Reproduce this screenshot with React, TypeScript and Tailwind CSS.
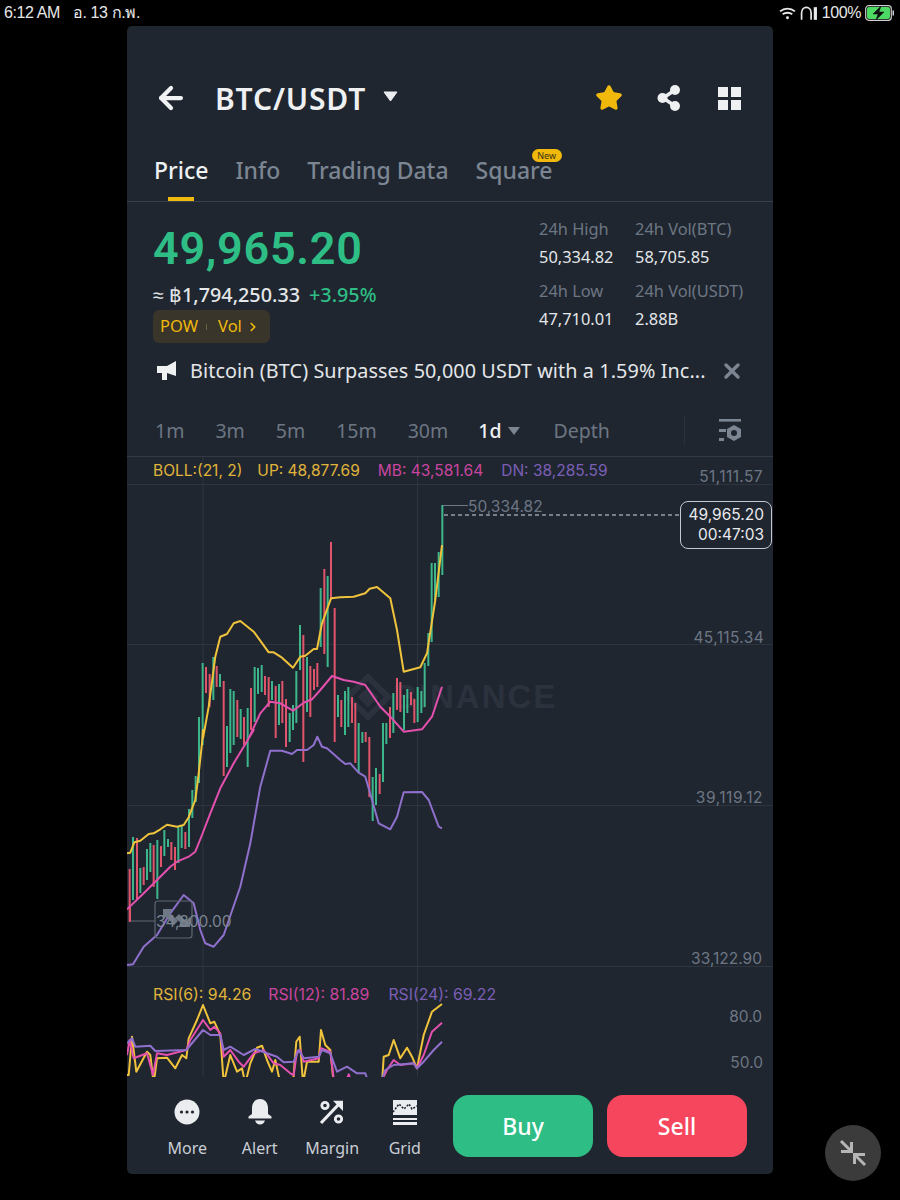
import React from "react";
import { ArrowLeft, X, Star, ChevronRight } from "lucide-react";

type P = [number, number];
const conv = (pts: P[], ox: number, oy: number) => pts.map(([x, y]) => `${(ox + x / 3).toFixed(1)},${(oy + y / 3).toFixed(1)}`).join(" ");
const z3 = (pts: P[]) => conv(pts, 127, 490);
const z4 = (pts: P[]) => conv(pts, 127, 730);
const z5 = (pts: P[]) => conv(pts, 127, 975);

const candles: [number, number, number, "g" | "r"][] = [
  [8, 869, 922, "r"], [18, 837, 900, "g"], [30, 838, 900, "r"], [40, 868, 893, "g"], [50, 867, 885, "r"], [60, 849, 880, "g"], [70, 843, 872, "g"], [80, 845, 887, "r"], [91, 840, 899, "g"], [102, 846, 867, "r"], [112, 830, 856, "g"], [123, 839, 847, "g"], [133, 842, 860, "r"], [144, 847, 870, "r"], [154, 827, 863, "g"], [164, 826, 848, "g"], [175, 832, 849, "r"], [186, 809, 847, "g"], [196, 790, 818, "g"], [206, 776, 802, "g"],
  [216, 717, 783, "g"], [227, 663, 745, "g"], [237, 667, 693, "r"], [248, 674, 707, "r"], [259, 657, 700, "g"], [269, 666, 687, "r"], [279, 674, 687, "g"], [290, 681, 776, "r"], [300, 726, 767, "g"], [310, 689, 753, "g"], [320, 691, 745, "g"], [331, 700, 737, "r"], [341, 709, 739, "g"], [351, 717, 745, "r"], [362, 708, 767, "g"], [372, 688, 730, "r"], [383, 667, 722, "g"], [393, 668, 694, "g"], [404, 665, 692, "g"], [414, 676, 695, "r"], [425, 677, 707, "r"], [435, 681, 700, "g"], [446, 686, 738, "r"], [456, 684, 725, "g"], [466, 681, 723, "r"], [477, 699, 747, "r"], [488, 713, 742, "g"], [498, 705, 730, "g"], [508, 671, 723, "g"], [519, 625, 670, "g"], [529, 635, 762, "r"], [540, 657, 712, "g"], [550, 666, 717, "r"], [561, 669, 690, "r"], [571, 663, 687, "r"], [581, 588, 647, "g"], [592, 569, 654, "r"], [602, 576, 667, "g"], [612, 542, 600, "r"], [623, 608, 742, "r"], [633, 695, 717, "g"], [643, 700, 727, "r"], [654, 691, 735, "g"], [664, 687, 727, "g"], [675, 697, 723, "r"], [685, 703, 763, "r"], [695, 723, 773, "g"], [706, 732, 743, "g"], [716, 732, 742, "r"], [727, 737, 797, "r"], [737, 777, 821, "g"], [747, 768, 805, "g"], [758, 774, 794, "r"], [768, 723, 782, "g"], [778, 723, 744, "g"], [789, 707, 738, "r"], [799, 693, 733, "g"], [810, 678, 710, "r"], [820, 682, 712, "r"], [831, 695, 730, "g"], [841, 689, 713, "g"], [852, 692, 705, "r"], [862, 699, 723, "r"], [872, 687, 722, "g"], [883, 691, 713, "g"], [893, 663, 707, "g"], [904, 633, 666, "g"], [914, 563, 642, "g"], [924, 563, 600, "g"], [935, 552, 597, "g"], [946, 505, 575, "g"],
];

const yellow = z4([[0, 370], [10, 368], [22, 337], [40, 332], [65, 312], [80, 310], [100, 298], [120, 284], [135, 287], [150, 290], [170, 285], [185, 262], [195, 235], [205, 210], [215, 130], [225, 40], [228, 0]]) + " " + z3([[228, 745], [245, 650], [265, 500], [280, 440], [300, 432], [320, 400], [340, 393], [380, 425], [425, 487], [440, 487], [465, 503], [498, 533], [520, 500], [535, 497], [560, 477], [570, 477], [585, 400], [612, 325], [640, 322], [680, 320], [715, 310], [728, 296], [750, 291], [790, 325], [810, 420], [830, 545], [880, 532], [900, 490], [925, 330], [945, 165]]);
const pink = z4([[0, 538], [50, 490], [100, 440], [130, 410], [150, 395], [185, 380], [205, 365], [225, 315], [250, 250], [280, 175], [320, 100], [350, 50], [380, 0]]) + " " + z3([[365, 745], [400, 670], [430, 635], [460, 640], [498, 662], [530, 638], [555, 628], [580, 600], [615, 558], [650, 570], [680, 575], [715, 585], [760, 650], [790, 680], [830, 725], [885, 718], [915, 680], [945, 590]]);
const purple = z4([[0, 705], [18, 703], [50, 650], [90, 615], [130, 550], [170, 495], [200, 520], [220, 600], [235, 640], [260, 650], [290, 615], [340, 470], [370, 340], [400, 170], [430, 62], [465, 62], [495, 72], [510, 60], [540, 60], [560, 45], [571, 20], [585, 50], [600, 55], [640, 90], [655, 102], [670, 100], [695, 128], [715, 140], [735, 210], [755, 280], [790, 298], [810, 260], [830, 187], [885, 186], [905, 210], [935, 290], [945, 295]]);
const rsiY = z5([[0, 300], [5, 300], [15, 185], [28, 290], [60, 230], [70, 240], [80, 325], [90, 250], [120, 248], [145, 280], [165, 240], [178, 250], [185, 190], [210, 135], [228, 90], [250, 145], [262, 140], [280, 180], [290, 325], [310, 240], [330, 290], [345, 280], [355, 325], [370, 265], [390, 218], [405, 212], [420, 255], [435, 290], [445, 255], [460, 325], [498, 325], [508, 200], [518, 185], [528, 325], [540, 260], [575, 260], [582, 165], [595, 210], [610, 225], [620, 325], [765, 325], [770, 245], [785, 240], [800, 195], [820, 250], [840, 218], [855, 245], [870, 280], [890, 180], [915, 110], [945, 87]]);
const rsiP = z5([[0, 240], [8, 195], [20, 250], [60, 235], [78, 300], [90, 235], [120, 240], [178, 225], [190, 195], [228, 135], [250, 165], [262, 155], [280, 175], [290, 245], [310, 225], [335, 260], [350, 275], [380, 235], [410, 225], [440, 265], [460, 270], [490, 295], [500, 300], [510, 230], [520, 225], [530, 260], [575, 250], [582, 220], [610, 230], [622, 325], [655, 325], [665, 298], [675, 325], [760, 325], [780, 285], [800, 255], [820, 270], [860, 265], [870, 280], [890, 240], [915, 170], [945, 143]]);
const rsiV = z5([[0, 205], [15, 190], [25, 215], [70, 212], [85, 228], [178, 225], [228, 165], [250, 180], [280, 180], [290, 225], [310, 215], [350, 240], [385, 222], [420, 235], [450, 245], [470, 262], [500, 260], [515, 225], [530, 250], [575, 245], [585, 225], [610, 235], [630, 290], [660, 275], [690, 295], [715, 295], [725, 325], [760, 325], [775, 285], [800, 270], [860, 265], [870, 280], [890, 260], [920, 225], [945, 200]]);

function Chart() {
  return (
    <svg viewBox="127 457 646 620" width={646} height={620} className="relative z-10 block">
      <g stroke="#2e353f" strokeWidth="1">
        <line x1="127" x2="773" y1="484.5" y2="484.5" />
        <line x1="127" x2="773" y1="644.5" y2="644.5" />
        <line x1="127" x2="773" y1="805.5" y2="805.5" />
        <line x1="127" x2="773" y1="966.5" y2="966.5" />
        <line x1="203" x2="203" y1="457" y2="1077" />
        <line x1="417.5" x2="417.5" y1="457" y2="1077" />
      </g>
      <g fill="none" stroke="#2b323d" strokeWidth="5">
        <path d="M368 677 L388 697 L368 717 L348 697 Z" strokeWidth="6" />
        <path d="M368 690 L375 697 L368 704 L361 697 Z" fill="#2b323d" />
      </g>
      <path d="M129 921 H155" stroke="#5d6672" strokeWidth="1" fill="none" />
      <path d="M130 905 V921" stroke="#e5566d" strokeWidth="2" />
      {candles.map(([x, t, b, c], i) => (
        <rect key={i} x={127 + x / 3 - 1} y={t} width={2} height={b - t} fill={c === "g" ? "#3cb68a" : "#e0556b"} />
      ))}
      <path d="M443 505.5 H468" stroke="#6f7885" strokeWidth="1" fill="none" />
      <path d="M444 515 H680" stroke="#d5d8dc" strokeWidth="1" strokeDasharray="4 3" fill="none" />
      <polyline points={yellow} fill="none" stroke="#f0c33c" strokeWidth="2" strokeLinejoin="round" />
      <polyline points={pink} fill="none" stroke="#e350ae" strokeWidth="2" strokeLinejoin="round" />
      <polyline points={purple} fill="none" stroke="#8f70cc" strokeWidth="2" strokeLinejoin="round" />
      <polyline points={rsiY} fill="none" stroke="#f0c33c" strokeWidth="2" strokeLinejoin="round" />
      <polyline points={rsiP} fill="none" stroke="#e350ae" strokeWidth="2" strokeLinejoin="round" />
      <polyline points={rsiV} fill="none" stroke="#8f70cc" strokeWidth="2" strokeLinejoin="round" />
      <rect x="155" y="901" width="37" height="37" rx="3" fill="none" stroke="#5d6672" strokeWidth="1.2" />
      <path d="M163 909 H173 L170 913 L178 921 L174 925 L166 917 L163 920 Z M190 927 H178 L181 923 L175 918 L179 914 L186 921 L190 917 Z" fill="#6f7885" />
    </svg>
  );
}

function MoreIcon() {
  return (
    <svg width="26" height="26" viewBox="0 0 26 26"><circle cx="13" cy="13" r="12.5" fill="#eaecef" /><circle cx="7.5" cy="13" r="1.6" fill="#1e2530" /><circle cx="13" cy="13" r="1.6" fill="#1e2530" /><circle cx="18.5" cy="13" r="1.6" fill="#1e2530" /></svg>
  );
}
function BellIcon() {
  return (
    <svg width="26" height="28" viewBox="0 0 26 28"><path d="M13 1 C7.5 1 5 5.5 5 10 V16 L1.5 18.5 V20.5 H24.5 V18.5 L21 16 V10 C21 5.5 18.5 1 13 1 Z" fill="#eaecef" /><path d="M8 22.5 H18 C17 25 15.5 26.5 13 26.5 C10.5 26.5 9 25 8 22.5 Z" fill="#eaecef" /></svg>
  );
}
function MarginIcon() {
  return (
    <svg width="26" height="26" viewBox="0 0 26 26" fill="none" stroke="#eaecef"><circle cx="6" cy="6.5" r="3.2" strokeWidth="2.8" /><circle cx="19.5" cy="20" r="3.2" strokeWidth="2.8" /><path d="M2 24 L21 4" strokeWidth="3.2" /><path d="M14 1.8 H24 V12 Z" fill="#eaecef" stroke="none" /></svg>
  );
}
function GridIcon() {
  return (
    <svg width="26" height="26" viewBox="0 0 26 26"><path d="M1 1 H25 V16 H1 Z" fill="#eaecef" /><path d="M1 13 L7 5 L12 10 L17 5 L20 10 L25 7" fill="none" stroke="#1e2530" strokeWidth="1.6" strokeDasharray="2 1.5" /><rect x="1" y="19" width="24" height="2" fill="#eaecef" /><rect x="1" y="23" width="24" height="3" fill="#eaecef" /></svg>
  );
}

export default function App() {
  const tf = ["1m", "3m", "5m", "15m", "30m"];
  return (
    <div className="relative w-[900px] h-[1200px] bg-black overflow-hidden font-['Noto_Sans',sans-serif]">
      <div className="h-[26px] flex items-center justify-between pl-[4px] pr-[5px] text-[#e8e8e8] text-[16px] font-['Liberation_Sans','Noto_Sans',sans-serif]">
        <div className="flex gap-[13px]">
          <span className="tracking-[-0.4px]">6:12 AM</span>
          <span className="tracking-[-0.4px]">อ. 13 ก.พ.</span>
        </div>
        <div className="flex items-center gap-[4px]">
          <svg width="17" height="13" viewBox="0 0 16 12" fill="none" stroke="#e8e8e8" strokeWidth="1.8"><path d="M1 4 C5 0.5 11 0.5 15 4" /><path d="M3.5 6.8 C6 4.8 10 4.8 12.5 6.8" /><circle cx="8" cy="10" r="1.4" fill="#e8e8e8" stroke="none" /></svg>
          <svg width="18" height="15" viewBox="0 0 17 14" fill="none" stroke="#e8e8e8" strokeWidth="1.6"><path d="M1.5 13 V6.5 C1.5 -0.5 10.5 -0.5 10.5 6.5 V13" /><rect x="13" y="1" width="3" height="12" fill="#e8e8e8" stroke="none" /></svg>
          <span className="tracking-[-0.4px]">100%</span>
          <svg width="30" height="16" viewBox="0 0 30 16"><rect x="0.7" y="0.7" width="25.6" height="14.6" rx="3" fill="none" stroke="#cfcfcf" strokeWidth="1.2" /><rect x="2" y="2" width="23" height="12" rx="2" fill="#4cd964" /><path d="M16 1 L8 9 H13 L11 15 L19 7 H14 Z" fill="#111" stroke="#111" strokeWidth="0.5" /><rect x="27.5" y="5.5" width="1.5" height="5" fill="#cfcfcf" /></svg>
        </div>
      </div>

      <div className="ml-[127px] w-[646px] h-[1148px] bg-[#1f2630] rounded-[5px] overflow-hidden flex flex-col">
        <div className="mt-[46px] h-[52px] flex items-center pl-[27px] pr-[32px]">
          <ArrowLeft size={34} strokeWidth={3} color="#f1f2f4" />
          <span className="ml-[27px] text-[30px] font-semibold text-[#eef0f2] tracking-[0.85px]">BTC/USDT</span>
          <svg className="ml-[17px] mb-[3px]" width="15" height="11" viewBox="0 0 15 11"><path d="M1 1 H14 L7.5 10 Z" fill="#eaecef" stroke="#eaecef" strokeLinejoin="round" /></svg>
          <div className="ml-auto flex items-center gap-[32px]">
            <Star size={28} fill="#f0b90b" color="#f0b90b" />
            <svg width="28" height="28" viewBox="0 0 28 28"><path d="M20 6 L8 14 L20 22" stroke="#eef0f2" strokeWidth="3.4" fill="none" /><circle cx="20" cy="6" r="5" fill="#eef0f2" /><circle cx="7.5" cy="14" r="5" fill="#eef0f2" /><circle cx="20" cy="22" r="5" fill="#eef0f2" /></svg>
            <div className="ml-[3px] grid grid-cols-2 gap-[3px] w-[23px]">
              <div className="h-[10px] bg-[#eef0f2]" /><div className="h-[10px] bg-[#eef0f2]" /><div className="h-[10px] bg-[#eef0f2]" /><div className="h-[10px] bg-[#eef0f2]" />
            </div>
          </div>
        </div>

        <div className="h-[78px] border-b border-[#3a414c] flex pl-[27px] gap-[27px] text-[23px] font-medium text-[#7c8592]">
          <div className="relative h-full flex flex-col items-center pt-[28px]">
            <span className="text-[#eef0f2] leading-[36px]">Price</span>
            <div className="absolute bottom-[0px] w-[26px] h-[4px] bg-[#f0b90b]" />
          </div>
          <span className="pt-[28px] leading-[36px]">Info</span>
          <span className="pt-[28px] leading-[36px]">Trading Data</span>
          <div className="relative pt-[28px]">
            <span className="leading-[36px]">Square</span>
            <span className="absolute left-[56px] top-[25px] w-[30px] h-[13px] rounded-full bg-[#f0b90b] text-[#3b3212] text-[9px] leading-[13px] text-center font-normal">New</span>
          </div>
        </div>

        <div className="flex pl-[26px] h-[141px]">
          <div className="w-[386px] flex flex-col">
            <div className="mt-[19px] h-[56px] text-[45px] leading-[56px] font-semibold text-[#2ebd85] font-['Roboto',sans-serif] tracking-[0.7px]">49,965.20</div>
            <div className="mt-[4px] h-[28px] flex items-center text-[19.8px] gap-[9px] font-medium whitespace-nowrap">
              <span className="text-[#e4e6e9]">≈ ฿1,794,250.33</span>
              <span className="text-[#2ebd85]">+3.95%</span>
            </div>
            <div className="mt-[1px] w-[117px] h-[34px] rounded-[6px] bg-[#39352a] flex items-center pl-[7px] text-[#f0b90b] text-[16.5px]">
              <span>POW</span>
              <span className="ml-[8px] w-px h-[6px] bg-[#6a6242]" />
              <span className="ml-[11px]">Vol</span>
              <ChevronRight size={14} strokeWidth={3} className="ml-[4px]" />
            </div>
          </div>
          <div className="flex gap-[24px] text-[16.4px]">
            <div className="w-[72px] flex flex-col">
              <span className="mt-[15px] h-[24px] text-[#6d7683] whitespace-nowrap">24h High</span>
              <span className="mt-[4px] h-[24px] text-[#e4e6e9] whitespace-nowrap">50,334.82</span>
              <span className="mt-[10px] h-[24px] text-[#6d7683] whitespace-nowrap">24h Low</span>
              <span className="mt-[4px] h-[24px] text-[#e4e6e9] whitespace-nowrap">47,710.01</span>
            </div>
            <div className="flex flex-col">
              <span className="mt-[15px] h-[24px] text-[#6d7683] whitespace-nowrap">24h Vol(BTC)</span>
              <span className="mt-[4px] h-[24px] text-[#e4e6e9] whitespace-nowrap">58,705.85</span>
              <span className="mt-[10px] h-[24px] text-[#6d7683] whitespace-nowrap">24h Vol(USDT)</span>
              <span className="mt-[4px] h-[24px] text-[#e4e6e9] whitespace-nowrap">2.88B</span>
            </div>
          </div>
        </div>

        <div className="h-[55px] flex items-center pl-[29px] pr-[29px]">
          <svg width="21" height="21" viewBox="0 0 21 21"><path d="M1 6 H11 L20 1 V16 L11 13 V20 H6 V13 H1 Z" fill="#eef0f2" /></svg>
          <span className="ml-[13px] text-[19.8px] text-[#e4e6e9] whitespace-nowrap tracking-[0.1px]">Bitcoin (BTC) Surpasses 50,000 USDT with a 1.59% Inc...</span>
          <X size={24} strokeWidth={3.4} color="#7c8592" className="ml-auto" />
        </div>

        <div className="h-[59px] pt-[7px] border-b border-[#333a45] flex items-center pl-[28px] pr-[31px] text-[19.5px] text-[#6d7683] gap-[31px]">
          {tf.map((t) => <span key={t}>{t}</span>)}
          <span className="flex items-center gap-[5px] -ml-[1px] text-[#eef0f2] font-medium">1d
            <svg width="14" height="10" viewBox="0 0 14 10"><path d="M1 1 H13 L7 9 Z" fill="#7c8592" /></svg>
          </span>
          <span className="ml-[2px]">Depth</span>
          <div className="ml-auto flex items-center gap-[33px]">
            <div className="w-px h-[28px] bg-[#2b323d]" />
            <svg width="24" height="26" viewBox="0 0 24 26"><rect x="1" y="1" width="22" height="2.6" fill="#7c8592" /><rect x="1" y="11" width="7" height="3" fill="#7c8592" /><rect x="1" y="20" width="5" height="3" fill="#7c8592" /><path d="M16 7 L23 11 V19 L16 23 L9 19 V11 Z" fill="#7c8592" /><circle cx="16" cy="15" r="3" fill="#1f2630" /></svg>
          </div>
        </div>

        <div className="relative h-[620px] font-['Inter',sans-serif] text-[15.5px]">
          <span className="absolute left-[266px] top-[219px] leading-[42px] text-[#2b323d] text-[33px] font-bold tracking-[2px] font-['Liberation_Sans',sans-serif]">BINANCE</span>
          <Chart />
          <div className="absolute z-20 left-[26px] top-[4px] flex h-[20px] leading-[20px] whitespace-nowrap">
            <span className="text-[#e0b43a]">BOLL:(21, 2)</span>
            <span className="ml-[15px] text-[#e0b43a]">UP: 48,877.69</span>
            <span className="ml-[18px] text-[#c9459f]">MB: 43,581.64</span>
            <span className="ml-[18px] text-[#7a5fb5]">DN: 38,285.59</span>
          </div>
          <div className="absolute z-20 left-[26px] top-[528px] flex h-[20px] leading-[20px] whitespace-nowrap text-[15.8px]">
            <span className="text-[#e0b43a]">RSI(6): 94.26</span>
            <span className="ml-[17px] text-[#c9459f]">RSI(12): 81.89</span>
            <span className="ml-[19px] text-[#7a5fb5]">RSI(24): 69.22</span>
          </div>
          <span className="absolute z-20 right-[10px] top-[10px] leading-[20px] text-[#6d7683] tracking-[0.4px]">51,111.57</span>
          <span className="absolute z-20 right-[9px] top-[171px] leading-[20px] text-[#6d7683] tracking-[0.35px]">45,115.34</span>
          <span className="absolute z-20 right-[10px] top-[331px] leading-[20px] text-[#6d7683] tracking-[0.5px]">39,119.12</span>
          <span className="absolute z-20 right-[11px] top-[492px] leading-[20px] text-[#6d7683]">33,122.90</span>
          <span className="absolute z-20 right-[11px] top-[550px] leading-[20px] text-[#6d7683]">80.0</span>
          <span className="absolute z-20 right-[10px] top-[596px] leading-[20px] text-[#6d7683]">50.0</span>
          <span className="absolute z-20 left-[341px] top-[40px] leading-[20px] text-[#6d7683]">50,334.82</span>
          <span className="absolute z-20 left-[29px] top-[455px] leading-[20px] text-[#7c8592]">34,800.00</span>
          <div className="absolute z-20 left-[553px] top-[44px] w-[92px] h-[48px] rounded-[8px] border-[1.5px] border-[#c5c9cf] bg-[#1f2630] flex flex-col items-end justify-center pr-[7px] text-[#e8eaed] text-[15.5px] leading-[20px]">
            <span>49,965.20</span>
            <span>00:47:03</span>
          </div>
        </div>

        <div className="flex-1 flex items-start pl-[24px]">
          <div className="flex text-[#c9ced5] text-[16px]">
            {[["More", <MoreIcon key="m" />], ["Alert", <BellIcon key="a" />], ["Margin", <MarginIcon key="g" />], ["Grid", <GridIcon key="r" />]].map(([l, icon]) => (
              <div key={l as string} className="w-[72.5px] flex flex-col items-center">
                <div className="h-[28px] mt-[21px] flex items-center">{icon}</div>
                <span className="mt-[10px] leading-[24px]">{l}</span>
              </div>
            ))}
          </div>
          <button className="ml-[12px] mt-[18px] w-[140px] h-[62px] rounded-[16px] bg-[#2ebd85] text-white text-[23px] font-medium">Buy</button>
          <button className="ml-[14px] mt-[18px] w-[140px] h-[62px] rounded-[16px] bg-[#f6465d] text-white text-[23px] font-medium">Sell</button>
        </div>
      </div>

      <div className="absolute left-[825px] top-[1125px] w-[56px] h-[56px] rounded-full bg-[#3b3b3b] flex items-center justify-center">
        <svg width="28" height="28" viewBox="0 0 28 28" fill="none" stroke="#b5b5b5" strokeWidth="3"><path d="M2 2 L12 12" /><path d="M2 12.5 H12.5 V3" /><path d="M26 26 L16 16" /><path d="M26 15.5 H15.5 V25" /></svg>
      </div>
    </div>
  );
}
